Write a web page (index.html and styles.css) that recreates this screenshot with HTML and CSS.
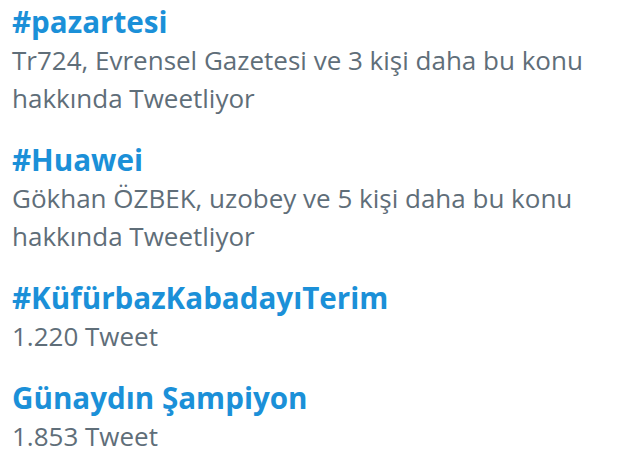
FILE: index.html
```html
<!DOCTYPE html>
<html lang="tr">
<head>
<meta charset="utf-8">
<link rel="stylesheet" href="styles.css">
</head>
<body>
<ul class="trends">
  <li class="trend">
    <div class="title">#pazartesi</div>
    <div class="meta">Tr724, Evrensel Gazetesi ve 3 kişi daha bu konu hakkında Tweetliyor</div>
  </li>
  <li class="trend">
    <div class="title">#Huawei</div>
    <div class="meta">Gökhan ÖZBEK, uzobey ve 5 kişi daha bu konu hakkında Tweetliyor</div>
  </li>
  <li class="trend">
    <div class="title">#KüfürbazKabadayıTerim</div>
    <div class="meta">1.220 Tweet</div>
  </li>
  <li class="trend">
    <div class="title">Günaydın Şampiyon</div>
    <div class="meta">1.853 Tweet</div>
  </li>
</ul>
</body>
</html>
```

FILE: styles.css
```css
html, body {
  margin: 0;
  padding: 0;
  background: #ffffff;
}
body {
  font-family: "Open Sans", "Noto Sans", sans-serif;
}
.trends {
  list-style: none;
  margin: 0;
  padding: 3px 0 0 12px;
  width: 600px;
  display: flex;
  flex-direction: column;
  gap: 24px;
}
.trend {
  display: flex;
  flex-direction: column;
}
.title {
  color: #1b90d8;
  font-weight: 700;
  font-size: 29.6px;
  line-height: 38px;
}
.meta {
  color: #5f6e79;
  font-size: 26px;
  line-height: 38px;
}
```
